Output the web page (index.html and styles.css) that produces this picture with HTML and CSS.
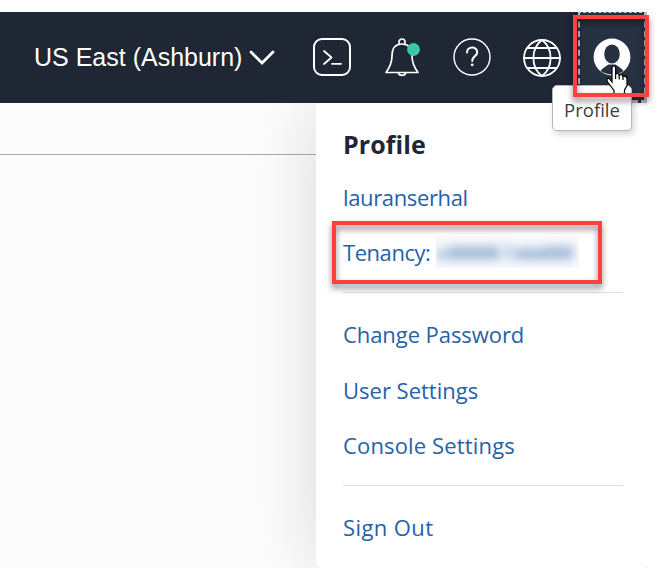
FILE: index.html
```html
<!DOCTYPE html>
<html lang="en">
<head>
<meta charset="utf-8">
<title>Profile menu</title>
<link rel="stylesheet" href="styles.css">
</head>
<body>
<div class="window">
  <header class="bar">
    <div class="region"><span class="region-name">US East (Ashburn)</span>
      <svg class="chevron" width="26" height="16" viewBox="0 0 26 16"><path d="M2 2 L13 13 L24 2"/></svg>
    </div>
    <nav class="icons">
      <svg class="icon" viewBox="0 0 38 38"><rect x="1" y="1" width="36" height="36" rx="8" stroke-width="2"/><path d="M11 13 L18.5 19.5 L11 26 M19 25.8 H28" stroke-width="1.8"/></svg>
      <svg class="icon" viewBox="0 0 38 38"><path d="M3 34.5 C7 29 9 25 9 18 C9 10 12.5 6 19 6 C25.5 6 29 10 29 18 C29 25 31 29 35 34.5 Z M16 6 V4 A3 3 0 0 1 22 4 V6 M15 34.5 A4.2 4.2 0 0 0 23 34.5" stroke-width="1.7"/><circle class="dot" cx="30.5" cy="11.5" r="6.4"/></svg>
      <svg class="icon" viewBox="0 0 38 38"><circle cx="19" cy="19" r="18" stroke-width="1.4"/><path d="M14 14.5 C14 8 24.2 8 24.2 14.2 C24.2 18.5 19.2 17.8 19.2 23" stroke-width="2"/><circle class="mark" cx="19.2" cy="26.8" r="1.4"/></svg>
      <svg class="icon" viewBox="0 0 38 38"><circle cx="19" cy="20" r="18" stroke-width="1.8"/><path d="M1 20 H37 M4.5 10 H33.5 M4.5 30 H33.5 M19 2 C7.5 10.5 7.5 29.5 19 38 C30.5 29.5 30.5 10.5 19 2" stroke-width="1.8"/></svg>
    </nav>
    <div class="profile-button">
      <svg class="avatar" viewBox="0 0 38 38"><circle class="disc" cx="19" cy="19" r="18.4"/><ellipse class="head" cx="19" cy="16" rx="7.8" ry="9.5"/><path class="head" d="M7.5 33 C10 29.5 13 28.5 15.5 26.5 H22.5 C25 28.5 28 29.5 30.5 33 C24 37.5 14 37.5 7.5 33Z"/></svg>
    </div>
  </header>
  <main class="content">
    <div class="page"></div>
    <section class="panel">
      <h1 class="title">Profile</h1>
      <a class="item name">lauranserhal</a>
      <a class="item tenancy">Tenancy:
        <svg class="redacted" width="143" height="32" viewBox="0 0 143 32"><g class="smudge"><rect x="2" y="13" width="8" height="11"/><rect x="12" y="10" width="52" height="14"/><rect x="70" y="9" width="5" height="15"/><rect x="79" y="12" width="30" height="12"/><rect x="109" y="10" width="28" height="14"/></g></svg>
      </a>
      <hr class="rule">
      <a class="item password">Change Password</a>
      <a class="item user">User Settings</a>
      <a class="item console">Console Settings</a>
      <hr class="rule">
      <a class="item signout">Sign Out</a>
    </section>
  </main>
</div>
<div class="tooltip">Profile</div>
<svg class="cursor" width="23" height="30" viewBox="0 0 23 30"><path d="M6 17 V3 Q6 1 7.8 1 Q9.6 1 9.6 3 V9 Q13.2 7.5 13.2 10.3 Q17 8.8 17 11.5 Q21 10.5 21 14 V20.5 L18.5 25 V28.5 H8 V25.5 L2 17.5 Q0 14.5 1.5 13.5 Q3 12.8 4.5 15 Z"/><path d="M9.6 9 V14 M13.2 10.3 V14.5 M17 11.5 V15"/></svg>
<div class="highlight highlight-profile"></div>
<div class="highlight highlight-tenancy"></div>
</body>
</html>
```
FILE: styles.css
```css
* { box-sizing: border-box; }
body { margin: 0; background: #fff; font-family: "Open Sans", "Noto Sans", sans-serif; }
.window { width: 647px; height: 556px; margin-top: 12px; overflow: hidden; display: flex; flex-direction: column; }
.bar { height: 91px; flex: none; background: #1e2733; display: flex; align-items: center; position: relative; z-index: 1; }
.region { width: 313px; padding-left: 34px; display: flex; align-items: center; color: #fff; font: 25px/30px "Liberation Sans", Arial, sans-serif; }
.region-name { width: 215px; white-space: nowrap; padding-bottom: 2px; }
.chevron { fill: none; stroke: #fff; stroke-width: 2.8; stroke-linecap: round; }
.icons { display: flex; gap: 32px; width: 265px; flex: none; }
.icon { width: 38px; height: 38px; flex: none; fill: none; stroke: #fff; stroke-linecap: round; stroke-linejoin: round; overflow: visible; margin-top: -2px; }
.dot { fill: #3cc8a8; stroke: none; }
.mark { fill: #fff; stroke: none; }
.profile-button { width: 69px; height: 91px; background: #263141; border: 3px dashed #b9bec4; border-width: 1px 3px 3px 2px; display: flex; align-items: center; justify-content: center; }
.avatar { width: 38px; height: 38px; }
.disc { fill: #fff; }
.head { fill: #263141; }
.content { flex: 1; display: flex; background: #fcfcfc; }
.page { width: 316px; height: 52px; border-bottom: 1px solid #a9a9a9; flex: none; }
.panel { width: 331px; background: #fff; border-radius: 5px; padding: 22px 24px 0 27px; box-shadow: 0 0 70px rgba(0, 0, 0, .14); }
.title { margin: 0; height: 44px; font-size: 25px; line-height: 39px; font-weight: 700; color: #1e2733; letter-spacing: .1px; }
.item { display: flex; align-items: center; height: 55.5px; font-size: 22px; color: #2562a8; white-space: nowrap; }
.name { letter-spacing: -.36px; }
.tenancy { letter-spacing: -.45px; }
.password { letter-spacing: -.07px; }
.user { padding-top: 1px; }
.console { letter-spacing: .15px; }
.signout { letter-spacing: .4px; }
.redacted { margin-left: 6px; background: #f6f8fb; }
.smudge { fill: #a9c0dc; filter: blur(4.5px); }
.rule { border: 0; height: 1px; background: #dfdfdf; margin: 12px 0 13px; }
.rule ~ .rule { margin: 12px 0 14px; }
.tooltip { position: absolute; left: 552px; top: 85px; width: 80px; height: 46px; z-index: 2; border: 1px solid #b3b8c0; border-radius: 5px; background: #fff; color: #3b3f45; font-size: 18.5px; line-height: 48px; text-align: center; box-shadow: 2px 3px 6px rgba(0, 0, 0, .18); }
.cursor { position: absolute; left: 606px; top: 65px; z-index: 3; fill: #fff; stroke: #000; stroke-width: 1.2; }
.highlight { position: absolute; z-index: 4; border: 4px solid #ff4040; filter: drop-shadow(0 4px 3px rgba(0, 0, 0, .5)); }
.highlight-profile { left: 573px; top: 15px; width: 76px; height: 82px; }
.highlight-tenancy { left: 332px; top: 221px; width: 270px; height: 63px; }
```
